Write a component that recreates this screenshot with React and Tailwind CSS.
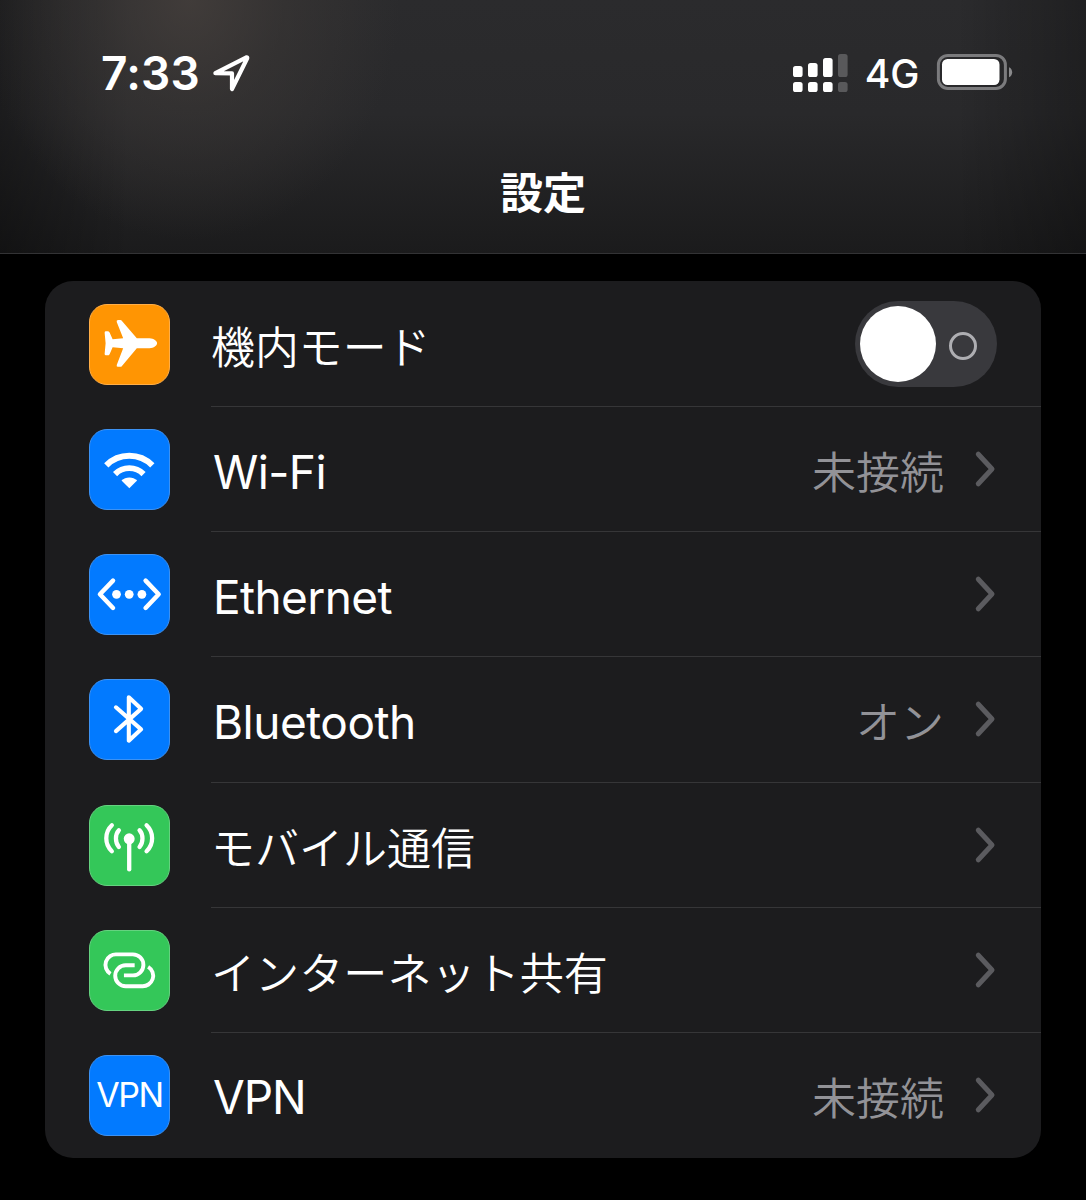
import React from 'react';

const PlaneIcon = () => (
  <svg viewBox="0 0 81 81" className="w-full h-full" fill="#fff">
    <path d="M15 28.4 Q15 27 16.4 27 H18 Q19.4 27 20.1 28.2 L23.2 35.2 L34 34.2 L27.4 17.4 Q26.9 15.4 28.8 15.4 L31 15.4 Q32.2 15.4 33 16.6 L48 34.2 L61 34.2 C65.4 34.4 68.8 37 68.8 39.3 C68.8 41.6 65.4 44.2 61 44.4 L48 44.4 L33 62.2 Q32.2 63.4 31 63.4 L28.8 63.4 Q26.9 63.4 27.4 61.4 L34 44.4 L23.2 43.4 L20.1 50.4 Q19.4 51.6 18 51.6 H16.4 Q15 51.6 15 50.2 L16 39.3 Z" />
  </svg>
);

const WifiIcon = () => (
  <svg viewBox="0 0 81 81" className="w-full h-full" fill="none" stroke="#fff">
    <path d="M16.7 36.2 A33.3 33.3 0 0 1 63.9 36.2" strokeWidth="6.2" />
    <path d="M25.7 45.2 A20.6 20.6 0 0 1 54.9 45.2" strokeWidth="6" />
    <path d="M40.3 59.8 L32.3 51.9 A11.3 11.3 0 0 1 48.3 51.9 Z" fill="#fff" stroke="none" />
  </svg>
);

const EthernetIcon = () => (
  <svg viewBox="0 0 81 81" className="w-full h-full" fill="none" stroke="#fff" strokeWidth="4.6" strokeLinecap="round" strokeLinejoin="round">
    <path d="M23.6 26.3 L10.2 40.3 L23.6 54.3 M57 26.3 L70.4 40.3 L57 54.3" />
    <g fill="#fff" stroke="none">
      <circle cx="27.2" cy="40.3" r="4.5" />
      <circle cx="40.2" cy="40.3" r="4.5" />
      <circle cx="53.2" cy="40.3" r="4.5" />
    </g>
  </svg>
);

const BluetoothIcon = () => (
  <svg viewBox="0 0 81 81" className="w-full h-full" fill="none" stroke="#fff" strokeWidth="4.2" strokeLinecap="round" strokeLinejoin="round">
    <path d="M26.6 28 L52.4 50.6 L39.8 62.2 V17.8 L52.4 29.6 L26.6 52.4" />
  </svg>
);

const AntennaIcon = () => (
  <svg viewBox="0 0 81 81" className="w-full h-full" fill="none" stroke="#fff" strokeWidth="4.4" strokeLinecap="round">
    <circle cx="40.2" cy="33.6" r="5.6" fill="#fff" stroke="none" />
    <path d="M40.2 36 V65" />
    <path d="M29.6 24.8 C25.6 29 25.6 37.8 29.6 42 M22.4 19.8 C14.8 27 14.8 39.2 22.4 46.4" />
    <path d="M50.8 24.8 C54.8 29 54.8 37.8 50.8 42 M58 19.8 C65.6 27 65.6 39.2 58 46.4" />
  </svg>
);

const HotspotIcon = () => (
  <svg viewBox="0 0 81 81" className="w-full h-full" fill="none" stroke="#fff" strokeWidth="4" strokeLinejoin="round">
    <path d="M21 43.9 A10.75 10.75 0 0 1 27.5 24 H44 A10.75 10.75 0 0 1 44 45.5 H34.8" />
    <path d="M59.6 36.7 A10.75 10.75 0 0 1 53.1 56.6 H36.6 A10.75 10.75 0 0 1 36.6 35.1 H45.8" />
  </svg>
);

const VpnIcon = () => (
  <span className="text-[34px] leading-none tracking-[-1.5px] text-white">VPN</span>
);

const Chevron = () => (
  <svg viewBox="0 0 22 38" className="w-[22px] h-[38px] shrink-0" fill="none" stroke="#5b5b5f" strokeWidth="5" strokeLinecap="round" strokeLinejoin="round">
    <path d="M4.3 4.2 L18 19 L4.3 33.8" />
  </svg>
);

const Toggle = () => (
  <div className="w-[142px] h-[86px] rounded-full bg-[#39393d] flex items-center pl-[5px] pr-5 justify-between">
    <div className="w-[76px] h-[76px] rounded-full bg-white" />
    <div className="w-7 h-7 mt-[3px] rounded-full border-3 border-[#aeaeb2]" />
  </div>
);

const rows = [
  { label: '機内モード', icon: PlaneIcon, tile: 'bg-[#ff9503] border-[#ffae48]', toggle: true, text: 'pt-[9px] text-[43.9px] font-[350]' },
  { label: 'Wi-Fi', icon: WifiIcon, tile: 'bg-[#027aff] border-[#3d92f3]', value: '未接続', text: 'pt-[5px] pl-[2px] text-[46px] tracking-[-0.6px]' },
  { label: 'Ethernet', icon: EthernetIcon, tile: 'bg-[#027aff] border-[#3d92f3]', text: 'pt-[5px] pl-[2px] text-[46px] tracking-[-0.6px]' },
  { label: 'Bluetooth', icon: BluetoothIcon, tile: 'bg-[#027aff] border-[#3d92f3]', value: 'オン', text: 'pt-[5px] pl-[2px] text-[46px] tracking-[-0.5px]' },
  { label: 'モバイル通信', icon: AntennaIcon, tile: 'bg-[#34c759] border-[#65d280]', text: 'pt-[9px] text-[44px] font-[350]' },
  { label: 'インターネット共有', icon: HotspotIcon, tile: 'bg-[#34c759] border-[#65d280]', text: 'pt-[9px] text-[44.1px] font-[350]' },
  { label: 'VPN', icon: VpnIcon, tile: 'bg-[#027aff] border-[#3d92f3]', value: '未接続', text: 'pt-[5px] pl-[2px] text-[46px] tracking-[-1px]' },
];

const Row = ({ row, last }) => {
  const Icon = row.icon;
  return (
    <div className="flex flex-1 items-stretch pl-11">
      <div className="w-[122px] shrink-0 flex items-center">
        <div className={`w-[81px] h-[81px] rounded-[18px] border flex items-center justify-center ${row.tile}`}>
          <Icon />
        </div>
      </div>
      <div className={`flex-1 flex items-center justify-between border-b ${row.toggle ? 'pr-[44px]' : 'pr-[45px]'} ${last ? 'border-transparent' : 'border-[#363638]'}`}>
        <span className={`leading-none whitespace-nowrap text-white ${row.text}`}>{row.label}</span>
        {row.toggle ? (
          <Toggle />
        ) : (
          <div className="flex items-center gap-[30px]">
            {row.value && (
              <span className="pt-[8px] text-[44px] leading-none font-[350] text-[#929297]">{row.value}</span>
            )}
            <Chevron />
          </div>
        )}
      </div>
    </div>
  );
};

const StatusBar = () => (
  <div className="h-[145px] pl-[101px] pr-[73px] flex items-center justify-between text-white">
    <div className="flex items-center gap-[12px]">
      <span className="text-[46px] leading-none font-semibold tracking-[0.2px]">7:33</span>
      <svg viewBox="0 0 38 38" className="w-[38px] h-[38px]" fill="none" stroke="#fff" strokeWidth="4.2" strokeLinejoin="round">
        <path d="M3.4 19.2 L34.4 3.3 Q35.5 3 35.2 4.2 L20 35 V19.4 Z" />
      </svg>
    </div>
    <div className="flex items-center">
      <svg viewBox="0 0 56 40" className="w-14 h-10" fill="#fff">
        <rect x="1" y="13" width="9.6" height="11" rx="2.6" />
        <rect x="16" y="10" width="9.6" height="14" rx="2.6" />
        <rect x="31" y="5" width="9.6" height="19" rx="2.6" />
        <rect x="46" y="1" width="9.6" height="23" rx="2.6" fill="#59595b" />
        <rect x="1" y="29" width="9.6" height="10" rx="2.6" />
        <rect x="16" y="29" width="9.6" height="10" rx="2.6" />
        <rect x="31" y="29" width="9.6" height="10" rx="2.6" />
        <rect x="46" y="29" width="9.6" height="10" rx="2.6" fill="#59595b" />
      </svg>
      <span className="ml-[17px] pt-[2px] text-[39px] leading-none font-[450] tracking-[-0.3px]">4G</span>
      <svg viewBox="0 0 77 38" className="ml-[17px] mb-[2px] w-[77px] h-[38px]">
        <rect x="2.4" y="2.4" width="67" height="33" rx="9.5" fill="none" stroke="#7b7b7d" strokeWidth="3" />
        <rect x="6" y="6" width="57.5" height="26" rx="5.5" fill="#fff" />
        <path d="M73 14.2 C77.2 15.6 77.2 22.8 73 24.2 Z" fill="#8a8a8c" />
      </svg>
    </div>
  </div>
);

export default function App() {
  return (
    <div className="w-[1086px] h-[1200px] bg-black overflow-hidden font-['Inter','Noto_Sans_CJK_JP',sans-serif]">
      <header className="h-[254px] border-b border-[#333335] bg-[radial-gradient(ellipse_210px_240px_at_190px_0px,#46403dcc_0%,#3d393780_45%,transparent_100%),linear-gradient(to_right,#0005_0%,transparent_12%,transparent_88%,#0004_100%),linear-gradient(to_bottom,#2b2b2d_0%,#29292b_45%,#1b1b1c_100%)]">
        <StatusBar />
        <h1 className="pt-[27px] text-center text-[43px] leading-none font-bold text-white">設定</h1>
      </header>
      <main className="mt-[27px] ml-[45px] w-[996px] h-[877px] pt-px rounded-[28px] bg-[#1c1c1e] flex flex-col overflow-hidden">
        {rows.map((row, i) => (
          <Row key={row.label} row={row} last={i === rows.length - 1} />
        ))}
      </main>
    </div>
  );
}
